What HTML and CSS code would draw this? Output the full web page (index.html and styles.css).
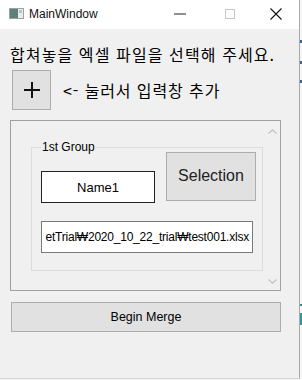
FILE: index.html
```html
<!DOCTYPE html>
<html lang="ko">
<head>
<meta charset="utf-8">
<title>MainWindow</title>
<link rel="stylesheet" href="styles.css">
</head>
<body>
<div class="window">
  <div class="titlebar">
    <svg class="app-icon" width="15" height="11" viewBox="0 0 15 11">
      <rect x="0.5" y="0.5" width="14" height="10" fill="#e9ecec" stroke="#9aa4a2"/>
      <rect x="1" y="1" width="8" height="9" fill="#5f8078"/>
      <rect x="10" y="2" width="3" height="3" fill="#b9c2c0"/>
    </svg>
    <span class="title">MainWindow</span>
    <div class="controls">
      <span class="ctl"><svg width="12" height="2" viewBox="0 0 12 2"><rect width="12" height="1" y="0.5" fill="#222"/></svg></span>
      <span class="ctl"><svg width="10" height="10" viewBox="0 0 10 10"><rect x="0.5" y="0.5" width="9" height="9" fill="none" stroke="#c8c8c8"/></svg></span>
      <span class="ctl"><svg width="12" height="12" viewBox="0 0 12 12"><path d="M0.5 0.5L11.5 11.5M11.5 0.5L0.5 11.5" stroke="#111" stroke-width="1.1"/></svg></span>
    </div>
  </div>
  <div class="content">
    <p class="heading">합쳐놓을 엑셀 파일을 선택해 주세요.</p>
    <div class="addrow">
      <button class="btn plus"><svg width="18" height="18" viewBox="0 0 18 18"><path d="M1 9H17M9 1V17" stroke="#111" stroke-width="2"/></svg></button>
      <span class="hint">&lt;- 눌러서 입력창 추가</span>
    </div>
    <div class="scrollarea">
      <div class="viewport">
        <div class="group">
          <span class="group-label">1st Group</span>
          <div class="row">
            <div class="field name">Name1</div>
            <button class="btn select">Selection</button>
          </div>
          <div class="field path"><span>etTrial₩2020_10_22_trial₩test001.xlsx</span></div>
        </div>
      </div>
      <div class="scrollbar">
        <svg width="9" height="5" viewBox="0 0 9 5"><path d="M0.5 4.5L4.5 0.8L8.5 4.5" fill="none" stroke="#c2c2c2" stroke-width="1.2"/></svg>
        <svg width="9" height="5" viewBox="0 0 9 5"><path d="M0.5 0.5L4.5 4.2L8.5 0.5" fill="none" stroke="#c2c2c2" stroke-width="1.2"/></svg>
      </div>
    </div>
    <button class="btn merge">Begin Merge</button>
  </div>
</div>
<span class="desk-mark m1"></span>
<span class="desk-mark m2"></span>
<span class="desk-mark m3"></span>
<span class="desk-mark m4"></span>
<span class="desk-mark m5"></span>
</body>
</html>
```

FILE: styles.css
```css
html, body {
  margin: 0;
  padding: 0;
}
body {
  width: 302px;
  height: 380px;
  background: #f6f6f6;
  position: relative;
  overflow: hidden;
  font-family: "Liberation Sans", Arial, sans-serif;
  color: #000;
}
.window {
  width: 299px;
  height: 378px;
  background: #f0f0f0;
  border-right: 1px solid #a9a9a9;
  border-bottom: 1px solid #d4d4d4;
}
.titlebar {
  height: 29px;
  background: #fff;
  display: flex;
  align-items: center;
}
.app-icon {
  margin-left: 9px;
  margin-top: -2px;
}
.title {
  margin-left: 5px;
  font-size: 12px;
  margin-top: -1px;
  color: #111;
}
.controls {
  margin-left: auto;
  display: flex;
  height: 29px;
  margin-top: -1px;
}
.ctl {
  width: 46px;
  display: flex;
  align-items: center;
  justify-content: center;
}
.ctl:first-child {
  justify-content: flex-start;
  padding-left: 13px;
  box-sizing: border-box;
}
.content {
  padding: 0;
}
.heading {
  margin: 15px 0 0 10px;
  font-family: "Noto Sans CJK KR", sans-serif;
  font-size: 16px;
  line-height: 20px;
  height: 20px;
  letter-spacing: 1.1px;
  white-space: nowrap;
}
.addrow {
  margin-top: 6px;
  padding-left: 12px;
  display: flex;
  align-items: center;
  gap: 12px;
}
.btn {
  background: #e1e1e1;
  border: 1px solid #adadad;
  padding: 0;
  margin: 0;
  font-family: "Liberation Sans", Arial, sans-serif;
  color: #000;
  box-sizing: border-box;
  display: flex;
  align-items: center;
  justify-content: center;
}
.plus {
  width: 39px;
  height: 40px;
}
.hint {
  font-family: "Noto Sans CJK KR", sans-serif;
  font-size: 16px;
  line-height: 20px;
  letter-spacing: 0.9px;
  white-space: nowrap;
}
.scrollarea {
  margin: 10px 0 0 10px;
  width: 271px;
  height: 171px;
  border: 1px solid #a0a0a0;
  box-sizing: border-box;
  display: flex;
}
.viewport {
  flex: 1;
  padding: 26px 0 0 20px;
}
.group {
  position: relative;
  width: 232px;
  height: 124px;
  border: 1px solid #dcdcdc;
  box-sizing: border-box;
  padding: 4px 0 0 9px;
}
.group-label {
  position: absolute;
  left: 9px;
  top: -8px;
  padding: 0 1px;
  background: #f0f0f0;
  font-size: 12px;
  line-height: 14px;
}
.row {
  display: flex;
  align-items: flex-start;
}
.field {
  background: #fff;
  box-sizing: border-box;
  display: flex;
  align-items: center;
  white-space: nowrap;
  overflow: hidden;
}
.name {
  margin-top: 19px;
  width: 114px;
  height: 32px;
  border: 1px solid #222;
  justify-content: center;
  font-size: 13px;
}
.select {
  margin-left: 11px;
  width: 90px;
  height: 49px;
  font-size: 16px;
  padding-bottom: 1px;
  color: #222;
}
.path {
  margin-top: 18px;
  width: 212px;
  height: 32px;
  border: 1px solid #7a7a7a;
  justify-content: flex-end;
  padding-right: 3px;
  font-size: 12px;
  letter-spacing: -0.22px;
}
.path span {
  flex-shrink: 0;
}
.scrollbar {
  width: 16px;
  display: flex;
  flex-direction: column;
  align-items: center;
  justify-content: space-between;
  padding: 8px 0 6px;
  box-sizing: border-box;
}
.merge {
  margin: 11px 0 0 11px;
  width: 270px;
  height: 30px;
  font-size: 12.5px;
}
.desk-mark {
  position: absolute;
  left: 300px;
  width: 2px;
  height: 3px;
  background: #3f6487;
}
.m1 { top: 40px; }
.m2 { top: 61px; }
.m3 { top: 80px; }
.m4 { top: 304px; background: #2a8a8a; height: 2px; }
.m5 { top: 313px; background: #2a9a9a; height: 12px; }
```
